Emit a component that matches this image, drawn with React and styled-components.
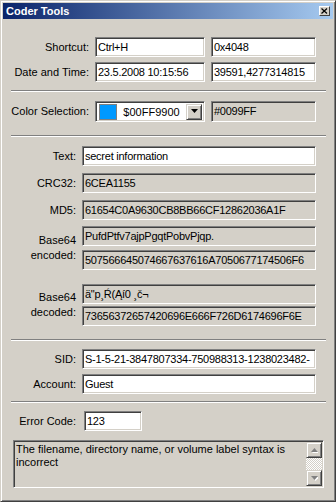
import React from 'react'
import styled, {createGlobalStyle} from 'styled-components'

const GlobalStyle=createGlobalStyle`
  html,body{margin:0;padding:0;background:#d4d0c8;}
  *{box-sizing:border-box;}
  body{font-family:"Liberation Sans",Arial,sans-serif;font-size:11px;color:#000;}
`;

const Window=styled.div`
  width:336px;
  height:502px;
  background:#d4d0c8;
  border:1px solid;
  border-color:#d4d0c8 #404040 #404040 #d4d0c8;
  box-shadow:inset 1px 1px #fff, inset -1px -1px #808080;
  padding:2px;
  display:flex;
  flex-direction:column;
`;

const TitleBar=styled.div`
  height:16px;
  background:linear-gradient(to right,#0a246a,#a6caf0);
  display:flex;
  align-items:center;
  justify-content:space-between;
  padding:0 3px 0 3px;
`;

const Title=styled.span`
  color:#fff;
  font-weight:bold;
  font-size:11px;
  line-height:16px;
`;

const CloseButton=styled.div`
  width:11px;
  height:10px;
  background:#d4d0c8;
  border:1px solid;
  border-color:#fff #404040 #404040 #fff;
  display:flex;
  align-items:center;
  justify-content:center;
`;

const Content=styled.div`
  padding:18px 7px 0 8px;
  display:flex;
  flex-direction:column;
`;

const TopGrid=styled.div`
  display:grid;
  grid-template-columns:78px 110px 105px;
  column-gap:6px;
  row-gap:5px;
  align-items:center;
`;

const FormGrid=styled.div`
  display:grid;
  grid-template-columns:65px 234px;
  column-gap:6px;
  row-gap:${p=>p.$gap||0}px;
  align-items:center;
  margin-top:${p=>p.$mt||0}px;
`;

const Label=styled.div`
  text-align:right;
  white-space:nowrap;
  line-height:15px;
  grid-row:${p=>p.$span?'span 2':'auto'};
`;

const Field=styled.div`
  height:${p=>p.$h||20}px;
  background:${p=>p.$readOnly?'#d4d0c8':'#fff'};
  border:1px solid;
  border-color:#808080 #fff #fff #808080;
  box-shadow:inset 1px 1px #404040, inset -1px -1px #d4d0c8;
  padding:1px 2px 0 2px;
  line-height:16px;
  letter-spacing:-0.25px;
  white-space:nowrap;
  overflow:hidden;
`;

const Separator=styled.div`
  border-top:1px solid #808080;
  border-bottom:1px solid #fff;
  margin:${p=>p.$mt}px 0 ${p=>p.$mb}px 0;
`;

const Combo=styled.div`
  height:21px;
  background:#fff;
  border:1px solid;
  border-color:#808080 #fff #fff #808080;
  box-shadow:inset 1px 1px #404040, inset -1px -1px #d4d0c8;
  padding:1px 2px 1px 2px;
  display:flex;
  align-items:center;
`;

const Swatch=styled.div`
  width:18px;
  height:16px;
  margin-left:1px;
  background:${p=>p.$color};
  border:1px solid #808080;
`;

const ComboText=styled.div`
  flex:1;
  text-align:center;
  line-height:16px;
`;

const RaisedButton=styled.div`
  width:16px;
  height:16px;
  background:#d4d0c8;
  border:1px solid;
  border-color:#d4d0c8 #404040 #404040 #d4d0c8;
  box-shadow:inset 1px 1px #fff, inset -1px -1px #808080;
  display:flex;
  align-items:center;
  justify-content:center;
`;

const ErrorGrid=styled.div`
  display:grid;
  grid-template-columns:65px 58px;
  column-gap:8px;
  align-items:center;
`;

const Memo=styled.div`
  margin:9px 2px 0 2px;
  height:48px;
  background:#d4d0c8;
  border:1px solid;
  border-color:#808080 #fff #fff #808080;
  box-shadow:inset 1px 1px #404040, inset -1px -1px #d4d0c8;
  padding:1px 1px 1px 2px;
  display:flex;
`;

const MemoText=styled.div`
  flex:1;
  line-height:13px;
  padding-top:1px;
  padding-right:4px;
`;

const ScrollBar=styled.div`
  width:16px;
  display:flex;
  flex-direction:column;
`;

const Track=styled.div`
  flex:1;
  background:repeating-conic-gradient(#fff 0 25%,#d4d0c8 0 50%) 0 0/2px 2px;
`;

const Arrow=({down,disabled})=>(
  <svg width="7" height="5" viewBox="0 0 7 5">
    {disabled && <polygon points={down?"1,1 8,1 4.5,5":"4.5,1 8,5 1,5"} fill="#fff"/>}
    <polygon points={down?"0,0 7,0 3.5,4":"3.5,0 7,4 0,4"} fill={disabled?'#808080':'#000'}/>
  </svg>
)

const App=()=>{
  return(
    <Window>
      <GlobalStyle/>
      <TitleBar>
        <Title>Coder Tools</Title>
        <CloseButton>
          <svg width="7" height="6" viewBox="0 0 7 6">
            <path d="M0.5 0.5 L6 5.5 M6 0.5 L0.5 5.5" stroke="#000" strokeWidth="1.2"/>
          </svg>
        </CloseButton>
      </TitleBar>
      <Content>
        <TopGrid>
          <Label>Shortcut:</Label>
          <Field>Ctrl+H</Field>
          <Field>0x4048</Field>
          <Label>Date and Time:</Label>
          <Field>23.5.2008 10:15:56</Field>
          <Field>39591,4277314815</Field>
        </TopGrid>
        <Separator $mt={8} $mb={9}/>
        <TopGrid>
          <Label>Color Selection:</Label>
          <Combo>
            <Swatch $color="#0099ff"/>
            <ComboText>$00FF9900</ComboText>
            <RaisedButton><Arrow down/></RaisedButton>
          </Combo>
          <Field $readOnly $h={21}>#0099FF</Field>
        </TopGrid>
        <Separator $mt={13} $mb={9}/>
        <FormGrid $gap={7}>
          <Label>Text:</Label>
          <Field>secret information</Field>
          <Label>CRC32:</Label>
          <Field $readOnly>6CEA1155</Field>
          <Label>MD5:</Label>
          <Field $readOnly>61654C0A9630CB8BB66CF12862036A1F</Field>
        </FormGrid>
        <FormGrid $gap={4} $mt={6}>
          <Label $span>Base64<br/>encoded:</Label>
          <Field $readOnly>PufdPtfv7ajpPgqtPobvPjqp.</Field>
          <Field $readOnly>507566645074667637616A7050677174506F6</Field>
        </FormGrid>
        <FormGrid $gap={2} $mt={14}>
          <Label $span>Base64<br/>decoded:</Label>
          <Field $readOnly>ä"p¸Ŕ(Ąí0 ¸č¬</Field>
          <Field $readOnly>73656372657420696E666F726D6174696F6E</Field>
        </FormGrid>
        <Separator $mt={13} $mb={8}/>
        <FormGrid $gap={5}>
          <Label>SID:</Label>
          <Field>S-1-5-21-3847807334-750988313-1238023482-</Field>
          <Label>Account:</Label>
          <Field>Guest</Field>
        </FormGrid>
        <Separator $mt={7} $mb={8}/>
        <ErrorGrid>
          <Label>Error Code:</Label>
          <Field>123</Field>
        </ErrorGrid>
        <Memo>
          <MemoText>The filename, directory name, or volume label syntax is incorrect</MemoText>
          <ScrollBar>
            <RaisedButton><Arrow disabled/></RaisedButton>
            <Track/>
            <RaisedButton><Arrow down disabled/></RaisedButton>
          </ScrollBar>
        </Memo>
      </Content>
    </Window>
  )
}
export default App
